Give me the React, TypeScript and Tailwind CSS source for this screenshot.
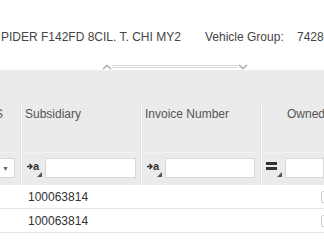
import React from "react";

function FilterMark({ kind }: { kind: "text" | "equal" }) {
  return (
    <div className="relative w-[20px] h-[20px] shrink-0">
      {kind === "text" ? (
        <div className="absolute left-[2px] top-[2px] flex items-center">
          <svg width="6" height="7" viewBox="0 0 6 7">
            <path d="M0 3.5H5M2.5 1L5 3.5L2.5 6" fill="none" stroke="#333" strokeWidth="1.5" />
          </svg>
          <span className="text-[11px] leading-[12px] font-bold text-[#333]">a</span>
        </div>
      ) : (
        <div className="absolute left-[1px] top-[4px] flex flex-col gap-[2px]">
          <div className="w-[11px] h-[3px] bg-[#333]" />
          <div className="w-[11px] h-[3px] bg-[#333]" />
        </div>
      )}
      <svg className="absolute left-[12px] top-[14px]" width="5" height="5" viewBox="0 0 5 5">
        <polygon points="5,0 5,5 0,5" fill="#555" />
      </svg>
    </div>
  );
}

function Separator() {
  return <div className="w-[2px] shrink-0 bg-white border-l border-[#e0e0e0]" />;
}

function HeaderCol({
  label,
  width,
  labelPad,
  children,
}: {
  label: string;
  width: string;
  labelPad: string;
  children?: React.ReactNode;
}) {
  return (
    <div className={`${width} shrink-0 flex flex-col`}>
      <div className={`h-[50px] pt-[4px] ${labelPad} text-[12px] leading-[14px] text-[#555] whitespace-nowrap border-b border-[#f1f1f1]`}>
        {label}
      </div>
      <div className="flex-1 flex items-start pt-[5px] pl-[3px]">{children}</div>
    </div>
  );
}

const rows = ["100063814", "100063814"];

export default function App() {
  return (
    <div
      className="w-[324px] h-[243px] overflow-hidden bg-white"
      style={{ fontFamily: '"Liberation Sans", Arial, sans-serif' }}
    >
      {/* vehicle info */}
      <div className="h-[70px] flex flex-col">
        <div className="pt-[30px] flex text-[12px] leading-[14px] text-[#444] whitespace-nowrap">
          <span className="w-[205px] pl-[1px]">PIDER F142FD 8CIL. T. CHI MY2</span>
          <span className="w-[92px]">Vehicle Group:</span>
          <span>7428</span>
        </div>
        {/* splitter */}
        <div className="mt-auto h-[7px] flex items-center pl-[102px]">
          <svg width="10" height="6" viewBox="0 0 10 6">
            <polyline points="1,5 5,1.5 9,5" fill="none" stroke="#a8a8a8" strokeWidth="1.6" />
          </svg>
          <div className="w-[126px] h-[3px] border-t border-b border-[#d8d8d8]" />
          <svg width="10" height="6" viewBox="0 0 10 6">
            <polyline points="1,1 5,4.5 9,1" fill="none" stroke="#a8a8a8" strokeWidth="1.6" />
          </svg>
        </div>
      </div>

      {/* grid header */}
      <div className="h-[115px] bg-[#ebebeb] flex flex-col">
        <div className="h-[33px]" />
        <div className="flex-1 flex">
          <div className="w-[20px] shrink-0 flex flex-col overflow-hidden">
            <div className="h-[50px] pt-[4px] text-[12px] leading-[14px] text-[#555] -ml-[5px] border-b border-[#f1f1f1]">S</div>
            <div className="flex-1 pt-[5px]">
              <div className="w-[15px] h-[20px] bg-white border border-l-0 border-[#d6d6d6] flex items-center pl-[2px]">
                <span className="text-[7px] text-[#666] leading-none">▼</span>
              </div>
            </div>
          </div>
          <Separator />
          <HeaderCol label="Subsidiary" width="w-[118px]" labelPad="pl-[3px]">
            <FilterMark kind="text" />
            <div className="w-[91px] h-[20px] bg-white border border-[#d9d9d9]" />
          </HeaderCol>
          <Separator />
          <HeaderCol label="Invoice Number" width="w-[118px]" labelPad="pl-[3px]">
            <FilterMark kind="text" />
            <div className="w-[90px] h-[20px] bg-white border border-[#d9d9d9]" />
          </HeaderCol>
          <Separator />
          <HeaderCol label="Owned" width="w-[62px]" labelPad="pl-[25px]">
            <FilterMark kind="equal" />
            <div className="w-[50px] h-[20px] bg-white border border-[#d9d9d9]" />
          </HeaderCol>
        </div>
      </div>

      {/* rows */}
      {rows.map((r, i) => (
        <div key={i} className="h-[24px] flex items-center border-b border-[#e4e4e4] text-[12px] leading-[14px] text-[#333]">
          <div className="w-[28px] shrink-0" />
          <div className="w-[293px] shrink-0">{r}</div>
          <div className="w-[10px] h-[12px] shrink-0 rounded-[2px] border border-[#d0d0d0]" />
        </div>
      ))}
    </div>
  );
}
